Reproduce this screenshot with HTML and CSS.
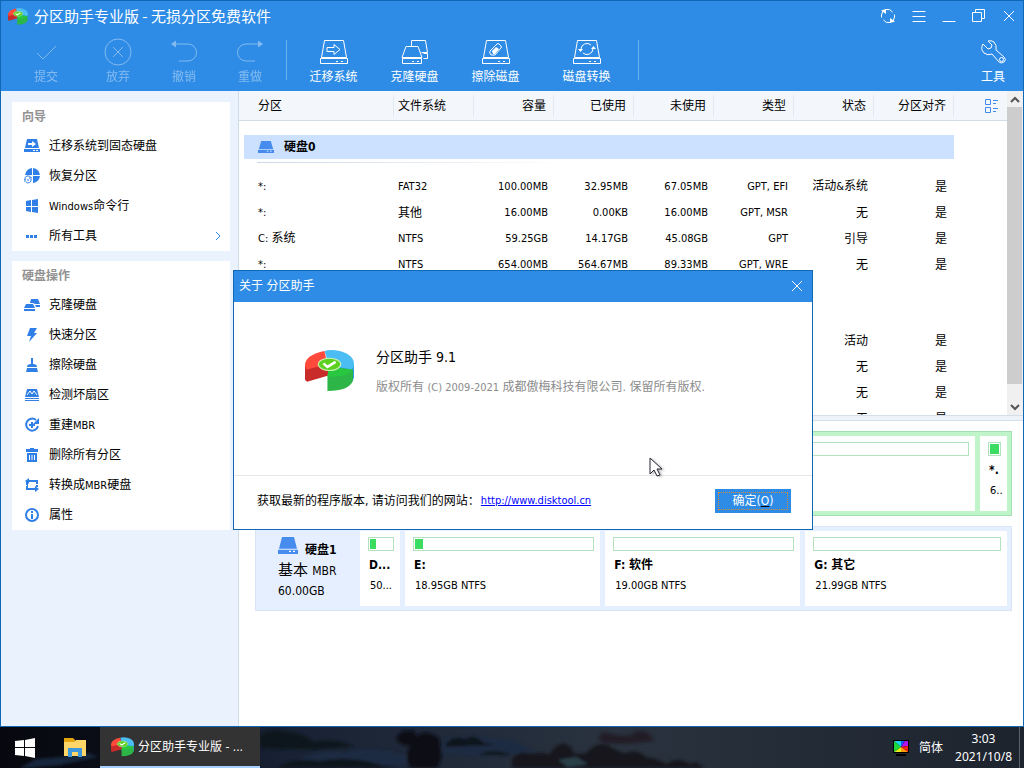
FILE: index.html
```html
<!DOCTYPE html>
<html lang="zh-CN">
<head>
<meta charset="utf-8">
<title>分区助手专业版 - 无损分区免费软件</title>
<link rel="stylesheet" href="styles.css">
</head>
<body>
<svg class="defs" width="0" height="0" aria-hidden="true">
  <defs>
    <symbol id="logo" viewBox="0 0 48 41">
      <path d="M24 17 48 14V27Q46 33 42 34L24 26z" fill="#2a9ee0"/>
      <path d="M19 1Q25-1 34 1Q48 5 48 14Q48 17 46 19L24 15z" fill="#4bbdf3"/>
      <path d="M0 15 20 10 23 16V25L2 31 0 29z" fill="#c92b2b"/>
      <path d="M19 1 22 14 2 19Q0 18 0 14Q1 5 19 1z" fill="#ff4a3b"/>
      <path d="M22 25 47 19V30Q43 40 22 40z" fill="#2db548"/>
      <path d="M23 16 46 19Q42 27 22 26z" fill="#27c840"/>
      <ellipse cx="24" cy="14" rx="11" ry="6" fill="#5bd01f" stroke="#cdf3b8"/>
      <path d="m18 13 4 3.500 8-5" fill="none" stroke="#fff" stroke-width="2.500"/>
    </symbol>
    <symbol id="disk" viewBox="0 0 20 16">
      <path d="M4 0h12l3 11H1z M0 12h20v4H0z"/><path d="M11 13h2v1h-2z M15 13h2v1h-2z" fill="#fff"/>
    </symbol>
    <symbol id="drive" viewBox="0 0 28 26">
      <path d="M4.500 1.500h19l3 17h-25z M.5 19.500h27v5H.5z"/><path d="M16 22.500h2M21 22.500h2"/>
    </symbol>
  </defs>
</svg>
<div class="window">
  <header class="top">
    <div class="titlebar">
      <svg class="applogo" width="20" height="17"><use href="#logo"/></svg>
      <h1>分区助手专业版 - 无损分区免费软件</h1>
      <div class="winbtns">
        <button aria-label="刷新"><svg width="16" height="16" viewBox="0 0 16 16"><path d="M1.500 9.500V7A6 6 0 0 1 12.500 4M14.500 6.500V9A6 6 0 0 1 3.500 12"/><path class="solid" d="M1 2.500 6 1v5zM15 13.500 10 15v-5z"/></svg></button>
        <button aria-label="菜单"><svg width="14" height="16" viewBox="0 0 14 16"><path d="M.5 3.500h13M.5 8.500h13M.5 13.500h13"/></svg></button>
        <button aria-label="最小化"><svg width="14" height="16" viewBox="0 0 14 16"><path d="M.5 13.500h13"/></svg></button>
        <button aria-label="还原"><svg width="14" height="16" viewBox="0 0 14 16"><path d="M.5 4.500h9v9h-9zM3.500 4.500v-3h9v9h-3"/></svg></button>
        <button aria-label="关闭"><svg width="14" height="16" viewBox="0 0 14 16"><path d="m2 3 10 10M12 3 2 13"/></svg></button>
      </div>
    </div>
    <nav class="toolbar">
      <button class="tool w72" disabled><svg width="28" height="28" viewBox="0 0 28 28"><path d="m5 15 6 6L24 8"/></svg>提交</button>
      <button class="tool w72" disabled><svg width="28" height="28" viewBox="0 0 28 28"><circle cx="14" cy="14" r="13"/><path d="m9 9 10 10M19 9 9 19"/></svg>放弃</button>
      <button class="tool w60" disabled><svg width="28" height="28" viewBox="0 0 28 28"><path d="M3 6h15a8 8 0 0 1 0 17H9"/><path class="solid" d="m1 6 5-3.500v7z"/></svg>撤销</button>
      <button class="tool w72" disabled><svg width="28" height="28" viewBox="0 0 28 28"><path d="M25 6H10a8 8 0 0 0 0 17h9"/><path class="solid" d="m27 6-5-3.500v7z"/></svg>重做</button>
      <span class="sep"></span>
      <button class="tool w80 first"><svg width="28" height="26" viewBox="0 0 28 26"><use href="#drive"/><path d="M7 8.500h7V5.500l6 5-6 5v-3H7z"/></svg>迁移系统</button>
      <button class="tool w80"><svg width="28" height="26" viewBox="0 0 28 26"><path d="M5 7.500h12l4 11H1zM1.500 19.500h19v5h-19zM11 22.500h2M16 22.500h2M10.500 7V1.500h14l2 12h-6M22.500 14.500h4v5h-4"/></svg>克隆硬盘</button>
      <button class="tool w80"><svg width="28" height="26" viewBox="0 0 28 26"><use href="#drive"/><path d="m8 12 7-7q1-1 2 0l2 2q1 1 0 2l-6 7H9q-2-2-1-4z"/><path class="solid" d="m10 12 4-4 3 2-4 5h-2z"/></svg>擦除磁盘</button>
      <button class="tool w80 last"><svg width="28" height="26" viewBox="0 0 28 26"><use href="#drive"/><path d="M8 10a6 6 0 0 1 10-4M20 10a6 6 0 0 1-10 4"/><path class="solid" d="M5 10h5l-2.500 3zM18 10h5l-2.500-3z"/></svg>磁盘转换</button>
      <span class="sep"></span>
      <button class="tool w60 right"><svg width="28" height="28" viewBox="0 0 28 28"><path d="M4 6q-3 5 1 9 4 3 8 1l7 8q2 2 5 0t0-5l-8-7q1-5-2-8-3-2-6-1l4 4q0 4-4 4z"/><circle cx="22.500" cy="21.500" r="2"/></svg>工具</button>
    </nav>
  </header>

  <div class="main">
    <aside class="side">
      <section class="card">
        <h2>向导</h2>
        <a class="item" href="#"><svg viewBox="0 0 16 16"><path d="M3 1h10l2 9H1zM0 11h16v3H0z"/><path fill="#fff" d="M4 5h4V3l4 3-4 3V7H4zM9 12h2v1H9zM12 12h2v1h-2z"/></svg>迁移系统到固态硬盘</a>
        <a class="item" href="#"><svg viewBox="0 0 16 16"><path d="M8 0v7H1Q2 1 8 0zM9 0q6 1 7 7H9zM9 8h7q-1 6-7 7z"/><path class="thin" d="M1 12a3 3 0 0 1 6-2M7 11a3 3 0 0 1-5 3M5 10h3M1 14v-3M3 12h2"/></svg>恢复分区</a>
        <a class="item" href="#"><svg viewBox="0 0 16 16"><path d="m2 3 5-1v6H2zM8 2l6-1v7H8zM2 9h5v5l-5-1zM8 9h6v6l-6-1z"/></svg><span><span class="la">Windows</span>命令行</span></a>
        <a class="item" href="#"><svg viewBox="0 0 16 16"><path d="M2 7h3v3H2zM6 7h3v3H6zM10 7h3v3h-3z"/></svg>所有工具<svg class="chev" viewBox="0 0 8 10"><path d="m2 1 4 4-4 4"/></svg></a>
      </section>
      <section class="card">
        <h2>硬盘操作</h2>
        <a class="item" href="#"><svg viewBox="0 0 16 16"><path d="M2 7h7l2 4H0zM0 12h11v2H0zM6 6l1-4h7l2 5h-5L9 6zM11 8h5v2h-4z"/></svg>克隆硬盘</a>
        <a class="item" href="#"><svg viewBox="0 0 16 16"><path d="M6 1h7L10 6h3L5 15l2-6H3z"/></svg>快速分区</a>
        <a class="item" href="#"><svg viewBox="0 0 16 16"><path d="M7 1h2v6q4 0 4 3H3q0-3 4-3zM3 11h10l1 4H2z"/></svg>擦除硬盘</a>
        <a class="item" href="#"><svg viewBox="0 0 16 16"><path d="M3 2h10l2 8H1zM1 11h14v3H1z"/><path class="wthin" d="m3 8 3-4 2 3 2-3 3 4M1 12.500h14"/></svg>检测坏扇区</a>
        <a class="item" href="#"><svg viewBox="0 0 16 16"><path class="line" d="M12 3a6 6 0 1 0 2 6M8 5v6M5 8h6"/><path d="m15 1v6H9z"/></svg><span>重建<span class="la">MBR</span></span></a>
        <a class="item" href="#"><svg viewBox="0 0 16 16"><path d="M6 1h4v1h4v3H2V2h4zM3 6h10v9H3z"/><path class="wthin" d="M5.500 8v5M8 8v5M10.500 8v5"/></svg>删除所有分区</a>
        <a class="item" href="#"><svg viewBox="0 0 16 16"><path class="line" d="M3 9V4h10v4M3 8v4h8M13 7v3"/><path d="M1 4 5 1v6zM15 12l-4-3v6z"/><path fill="#fff" d="M1 8h2v1H1zM12 7h3v1h-3z"/></svg><span>转换成<span class="la">MBR</span>硬盘</span></a>
        <a class="item" href="#"><svg viewBox="0 0 16 16"><circle class="line" cx="8" cy="8" r="6"/><path d="M7 4h2v2H7zM7 7h2v5H7z"/></svg>属性</a>
      </section>
    </aside>

    <div class="content">
      <div class="listpane">
        <div class="list">
          <table>
            <colgroup><col class="cname"><col class="c"><col class="c"><col class="c"><col class="c"><col class="c"><col class="c"><col class="c"><col></colgroup>
            <thead><tr><th>分区</th><th>文件系统</th><th>容量</th><th>已使用</th><th>未使用</th><th>类型</th><th>状态</th><th>分区对齐</th><th class="view"><svg width="14" height="16" viewBox="0 0 14 16"><path d="M.5 1.500h5v5h-5zM.5 9.500h5v5h-5zM8 2.500h5M8 5.500h3M8 10.500h5M8 13.500h3"/></svg></th></tr></thead>
            <tbody>
              <tr class="diskrow"><td colspan="8"><div class="band"><svg width="16" height="12" viewBox="0 0 20 16" preserveAspectRatio="none"><use href="#disk"/></svg>硬盘0</div><div class="fade"></div></td><td></td></tr>
              <tr><td>*:</td><td>FAT32</td><td>100.00MB</td><td>32.95MB</td><td>67.05MB</td><td>GPT, EFI</td><td><span class="zh">活动</span>&amp;<span class="zh">系统</span></td><td class="zh">是</td><td></td></tr>
              <tr><td>*:</td><td class="zh">其他</td><td>16.00MB</td><td>0.00KB</td><td>16.00MB</td><td>GPT, MSR</td><td class="zh">无</td><td class="zh">是</td><td></td></tr>
              <tr><td>C: <span class="zh">系统</span></td><td>NTFS</td><td>59.25GB</td><td>14.17GB</td><td>45.08GB</td><td>GPT</td><td class="zh">引导</td><td class="zh">是</td><td></td></tr>
              <tr><td>*:</td><td>NTFS</td><td>654.00MB</td><td>564.67MB</td><td>89.33MB</td><td>GPT, WRE</td><td class="zh">无</td><td class="zh">是</td><td></td></tr>
              <tr class="diskrow plain"><td colspan="8"><div class="band"></div></td><td></td></tr>
              <tr><td></td><td></td><td></td><td></td><td></td><td></td><td class="zh">活动</td><td class="zh">是</td><td></td></tr>
              <tr><td></td><td></td><td></td><td></td><td></td><td></td><td class="zh">无</td><td class="zh">是</td><td></td></tr>
              <tr><td></td><td></td><td></td><td></td><td></td><td></td><td class="zh">无</td><td class="zh">是</td><td></td></tr>
              <tr><td></td><td></td><td></td><td></td><td></td><td></td><td class="zh">无</td><td class="zh">是</td><td></td></tr>
            </tbody>
          </table>
        </div>
        <div class="scroll">
          <svg width="16" height="16" viewBox="0 0 16 16"><path d="m4 11 4-4 4 4"/></svg>
          <div class="thumb"></div>
          <svg width="16" height="31" viewBox="0 0 16 31"><path d="m4 21 4 4 4-4"/></svg>
        </div>
      </div>
      <div class="splitter"></div>
      <div class="map">
        <div class="disk selected">
          <div class="dinfo"></div>
          <div class="part grow"><div class="bar"></div></div>
          <div class="part tiny"><div class="bar"><i class="full"></i></div><b>*.</b><span>6..</span></div>
        </div>
        <div class="disk">
          <div class="dinfo"><div class="dname"><svg width="20" height="17" viewBox="0 0 20 16" preserveAspectRatio="none"><use href="#disk"/></svg>硬盘1</div><div class="dtype">基本 <span class="mid">MBR</span></div><div class="mid">60.00GB</div></div>
          <div class="part small"><div class="bar"><i class="used6"></i></div><b>D...</b><span>50...</span></div>
          <div class="part fit"><div class="bar"><i class="used8"></i></div><b>E:</b><span>18.95GB NTFS</span></div>
          <div class="part fit"><div class="bar"></div><b>F: 软件</b><span>19.00GB NTFS</span></div>
          <div class="part fit wide"><div class="bar"></div><b>G: 其它</b><span>21.99GB NTFS</span></div>
        </div>
      </div>
    </div>
  </div>
</div>

<div class="dialog" role="dialog" aria-label="关于 分区助手">
  <div class="dtitle"><span>关于 分区助手</span><button aria-label="关闭对话框"><svg width="14" height="14" viewBox="0 0 14 14"><path d="m2 2 10 10M12 2 2 12"/></svg></button></div>
  <div class="dbody">
    <svg class="biglogo" width="49" height="42"><use href="#logo"/></svg>
    <div><p class="prod">分区助手 9.1</p><p class="copy">版权所有 <span class="la">(C) 2009-2021</span> 成都傲梅科技有限公司. 保留所有版权.</p></div>
  </div>
  <div class="dfoot"><span>获取最新的程序版本, 请访问我们的网站：</span><a class="url" href="#">http://www.disktool.cn</a><button class="ok"><span>确定(<u>O</u>)</span></button></div>
</div>
<svg class="cursor" width="16" height="22" viewBox="0 0 16 22"><path d="M1 1v16l4-4 3 6 3-1-3-6h5z" fill="#fff" stroke="#223"/></svg>

<footer class="taskbar">
  <svg class="scene" viewBox="0 0 1024 41" preserveAspectRatio="none">
    <defs>
      <linearGradient id="sky"><stop offset="0" stop-color="#07080e"/><stop offset=".1" stop-color="#0a0d16"/><stop offset=".28" stop-color="#182234"/><stop offset=".6" stop-color="#29323e"/><stop offset="1" stop-color="#1d242e"/></linearGradient>
      <filter id="soft"><feGaussianBlur stdDeviation="1.500"/></filter>
    </defs>
    <path fill="url(#sky)" d="M0 0h1024v41H0z"/>
    <g filter="url(#soft)">
      <path fill="#16263c" d="M20 41 36 32 62 30 88 26 98 30 60 38 30 41z"/>
      <path fill="#1c2c42" d="M300 32q20-10 46-6 20-8 60 2v10q-50 6-110-2zM445 12q30-6 70 2l20 10q-50 8-92 2z"/>
      <path fill="#10141f" d="M260 8q12-8 30-3 16 2 24 10 18-5 40 4-40 6-94 2zM280 38q20-8 40-4 30-6 60 4l20 3H280zM446 16q8-8 20-4 8-6 18 4l12 2-50 2zM478 28q16-8 34 0z"/>
      <path fill="#0e1019" d="M396 12q4-10 12-8 8-2 8 5 8-6 16-2 10 2 8 12 4 8-2 22h-28q-6-12 0-22-10 0-14-7z"/>
      <path fill="#19161f" d="M512 41V31q8-8 18-4 8-2 20 0 6-12 16-10 6 2 8 10l12-1q10-12 22-8 10 6 16 8 16-4 22 4 14 2 20 7 12-8 24 0 8-4 14 4z"/>
      <path fill="#211f28" d="M598 12q2-8 10-6 14 4 24 2 4-6 14-3 6 4 8 9-28 4-50 2z"/>
      <path fill="#294048" d="m558 33 18-3 12 7-20 3z"/>
    </g>
  </svg>
  <button class="tb" aria-label="开始"><svg width="20" height="20" viewBox="0 0 20 20"><path fill="#fff" d="m0 3 9-1v7H0zM10 2l10-2v9H10zM0 10h9v8l-9-1zM10 10h10v10l-10-2z"/></svg></button>
  <button class="tb" aria-label="文件资源管理器"><svg width="22" height="19" viewBox="0 0 22 19"><path fill="#e5a50e" d="M0 0h9l2 2v3H0z"/><path fill="#ffd667" d="M0 4h10l2-2h10v16H0z"/><path fill="#3f97dc" d="M4 10h14v9h-4v-5H8v5H4z"/></svg></button>
  <button class="task"><svg width="23" height="20"><use href="#logo"/></svg>分区助手专业版 - ...</button>
  <div class="tray">
    <svg width="16" height="16" viewBox="0 0 16 16"><path d="M0 0h16v13H0zM3 14h10v2H3z" fill="#000"/><path d="M1 1h7v6z" fill="#16d6e8"/><path d="M8 1h4L8 7z" fill="#1554ff"/><path d="M12 1h3v5L8 7z" fill="#b313ea"/><path d="M15 6v6L8 7z" fill="#f32016"/><path d="M15 12H8V7z" fill="#ff9b0c"/><path d="M8 12H1l7-5z" fill="#e9ee18"/><path d="M1 12V1l7 6z" fill="#1dd53d"/></svg>
    <span>简体</span>
    <div class="clock"><span>3:03</span><span>2021/10/8</span></div>
  </div>
</footer>
</body>
</html>
```
FILE: styles.css
```css
* { box-sizing: border-box; }
body {
  margin: 0;
  min-height: 100vh;
  display: flex;
  flex-direction: column;
  position: relative;
  font: 12px/16px "DejaVu Sans Condensed", "Noto Sans CJK SC", sans-serif;
  color: #000;
  background: #fff;
  overflow: hidden;
}
button { font: inherit; color: inherit; background: none; border: 0; padding: 0; }
h1, h2, p { margin: 0; font-weight: normal; }
a { color: inherit; text-decoration: none; }
svg { flex: none; }
.defs, .cursor, .scene { position: absolute; }
.la { font-size: 11px; }
.zh { font-size: 12px; }

.window {
  flex: 1;
  display: flex;
  flex-direction: column;
  border: 1px solid #1068b5;
  background: #fff;
}
.top { background: #2e8ce6; color: #fff; height: 90px; }
.top svg, .dtitle svg { fill: none; stroke: #fff; }
.top .applogo { stroke: none; }
.top .solid { fill: #fff; stroke: none; }
.titlebar { display: flex; align-items: center; height: 30px; padding: 0 7px; }
h1 { font-size: 15px; line-height: 20px; margin-left: 6px; font-family: "Noto Sans CJK SC", sans-serif; }
.winbtns { margin-left: auto; display: flex; gap: 16px; height: 16px; }
.toolbar { display: flex; align-items: flex-start; padding: 7px 0 0 9px; }
.tool { display: flex; flex-direction: column; align-items: center; justify-content: space-between; height: 47px; }
.tool svg { height: 28px; }
.tool:disabled { opacity: .4; color: #fff; }
.w60 { width: 60px; }
.w72 { width: 72px; }
.w80 { width: 81px; }
.first { margin-left: 6px; }
.last { margin: 0 11px 0 10px; }
.right { margin-left: auto; }
.sep { width: 1px; height: 40px; margin-top: 2px; background: #6bb0f0; }

.main { flex: 1; display: flex; }
.side {
  width: 238px;
  padding: 11px 8px 0 11px;
  background: #eaf2fe;
  border-right: 1px solid #cfdcea;
  display: flex;
  flex-direction: column;
  gap: 10px;
}
.card { background: #fff; }
h2 { height: 29px; line-height: 30px; padding-left: 10px; font-size: 12px; font-weight: bold; color: #929292; }
.item { display: flex; align-items: center; height: 30px; gap: 9px; padding: 0 8px 0 12px; }
.item svg { width: 16px; height: 16px; fill: #2f7fe6; }
.item .line, .item .thin { fill: none; stroke: #2f7fe6; stroke-width: 2; }
.item .thin { stroke-width: 1; }
.item .wthin { fill: none; stroke: #fff; stroke-width: 1; }
.item .chev { width: 8px; height: 10px; margin-left: auto; fill: none; stroke: #2e8ce6; }

.content { flex: 1; min-width: 0; display: flex; flex-direction: column; }
.listpane { height: 324px; display: flex; }
.list { flex: 1; min-width: 0; overflow: hidden; }
table { width: 100%; border-collapse: separate; border-spacing: 0; table-layout: fixed; font-size: 11px; }
.cname { width: 155px; }
.c { width: 80px; }
th {
  height: 30px;
  padding: 0 8px 0 0;
  font-size: 12px;
  font-weight: normal;
  text-align: right;
  background: linear-gradient(#e3e8ef, #e3e8ef) right center / 1px 22px no-repeat #f3f7fc;
  border-bottom: 1px solid #d4dee9;
}
td { height: 26px; padding: 1px 6px 0 0; text-align: right; white-space: nowrap; }
th:first-child, td:first-child { text-align: left; padding-left: 19px; }
th:nth-child(2), td:nth-child(2) { text-align: left; padding-left: 4px; }
.view { background: #f3f7fc; }
.view svg { display: block; margin-left: auto; fill: none; stroke: #3f8bea; }
.diskrow td { height: 50px; padding: 0; vertical-align: top; }
.diskrow td:first-child { padding: 14px 0 0 5px; }
.diskrow.plain td:first-child { padding-top: 12px; }
.band { display: flex; align-items: center; gap: 10px; height: 24px; padding-left: 14px; font-size: 12px; font-weight: bold; background: #cce0ff; }
.plain .band { background: none; }
td:nth-child(8) { padding-right: 7px; }
.band svg, .dname svg { fill: #468cee; }
.fade { height: 1px; margin: 3px 0 10px 13px; background: linear-gradient(90deg, #cbd7e8, #fff 45%); }
.scroll { width: 16px; display: flex; flex-direction: column; background: #f0f0f0; }
.scroll svg { fill: none; stroke: #555; stroke-width: 2; }
.thumb { flex: 1; background: #cdcdcd; margin-right: 1px; }
.splitter { height: 6px; background: #eef2f9; border: 1px solid #d5deeb; border-width: 1px 0; }

.map { flex: 1; padding: 10px 11px 10px 16px; display: flex; flex-direction: column; gap: 10px; }
.disk { display: flex; gap: 5px; height: 85px; padding: 4px; border: 1px solid #d9e5f4; background: #e6efff; }
.disk.selected { border-color: #a3deb2; background: #c0f5ca; }
.dinfo { width: 95px; padding: 6px 0 0 18px; }
.dname { display: flex; gap: 7px; height: 20px; line-height: 26px; font-size: 12px; font-weight: bold; }
.dtype { font-size: 15px; line-height: 24px; padding-top: 1px; }
.mid { font-size: 12px; }
.part { background: #fff; padding: 6px 6px 0 8px; display: flex; flex-direction: column; overflow: hidden; white-space: nowrap; font-size: 11px; }
.part b { font-size: 12px; line-height: 16px; margin: 6px 0 5px; padding-left: 1px; }
.part span { padding-left: 2px; }
.bar { height: 14px; flex: none; padding: 1px; border: 1px solid #b3e2bf; }
.bar i { display: block; height: 10px; background: #3bdc62; }
.used6 { width: 6px; }
.used8 { width: 8px; }
.full { width: 100%; }
.grow { flex: 1; }
.tiny { width: 27px; }
.small { width: 40px; }
.fit { flex: 195 1 0; }
.wide { flex-grow: 202; }

.dialog {
  position: absolute;
  left: 233px;
  top: 270px;
  width: 580px;
  display: flex;
  flex-direction: column;
  background: #fff;
  border: 1px solid #1068b5;
}
.dtitle { display: flex; align-items: center; justify-content: space-between; height: 31px; padding: 0 8px 2px 5px; background: #2e8ce6; color: #fff; }
.dtitle button { height: 14px; }
.dbody { display: flex; gap: 22px; height: 173px; padding: 44px 0 0 71px; }
.biglogo { margin-top: 4px; }
.prod { font-size: 14px; line-height: 22px; }
.copy { margin-top: 11px; color: #8c8c8c; }
.dfoot { display: flex; align-items: center; height: 54px; padding: 0 21px 3px 23px; border-top: 1px solid #e5e7ec; }
.url { color: #00f; text-decoration: underline; font-size: 11px; margin-left: 1px; }
.ok { margin-left: auto; padding: 3px; width: 76px; height: 24px; background: #2e8ce6; color: #fff; }
.ok span { display: block; line-height: 16px; border: 1px dotted #d98a35; }
.ok u { text-decoration-color: #000; }
.cursor { left: 649px; top: 457px; filter: drop-shadow(2px 1px 1px #8888); }

.taskbar { position: relative; display: flex; height: 41px; color: #fff; background: #101520; font-size: 12px; }
.scene { inset: 0; width: 100%; height: 100%; }
.tb, .task, .tray { position: relative; display: flex; align-items: center; }
.tb { width: 50px; justify-content: center; }
.task { width: 160px; gap: 4px; padding-left: 11px; background: #333; border-bottom: 2px solid #a6cdff; }
.tray { margin-left: auto; gap: 10px; padding-right: 7px; border-right: 1px solid #596069; margin-right: 4px; }
.clock { display: flex; flex-direction: column; align-items: center; line-height: 18px; margin-left: 2px; font-family: "Noto Sans", sans-serif; }
```
